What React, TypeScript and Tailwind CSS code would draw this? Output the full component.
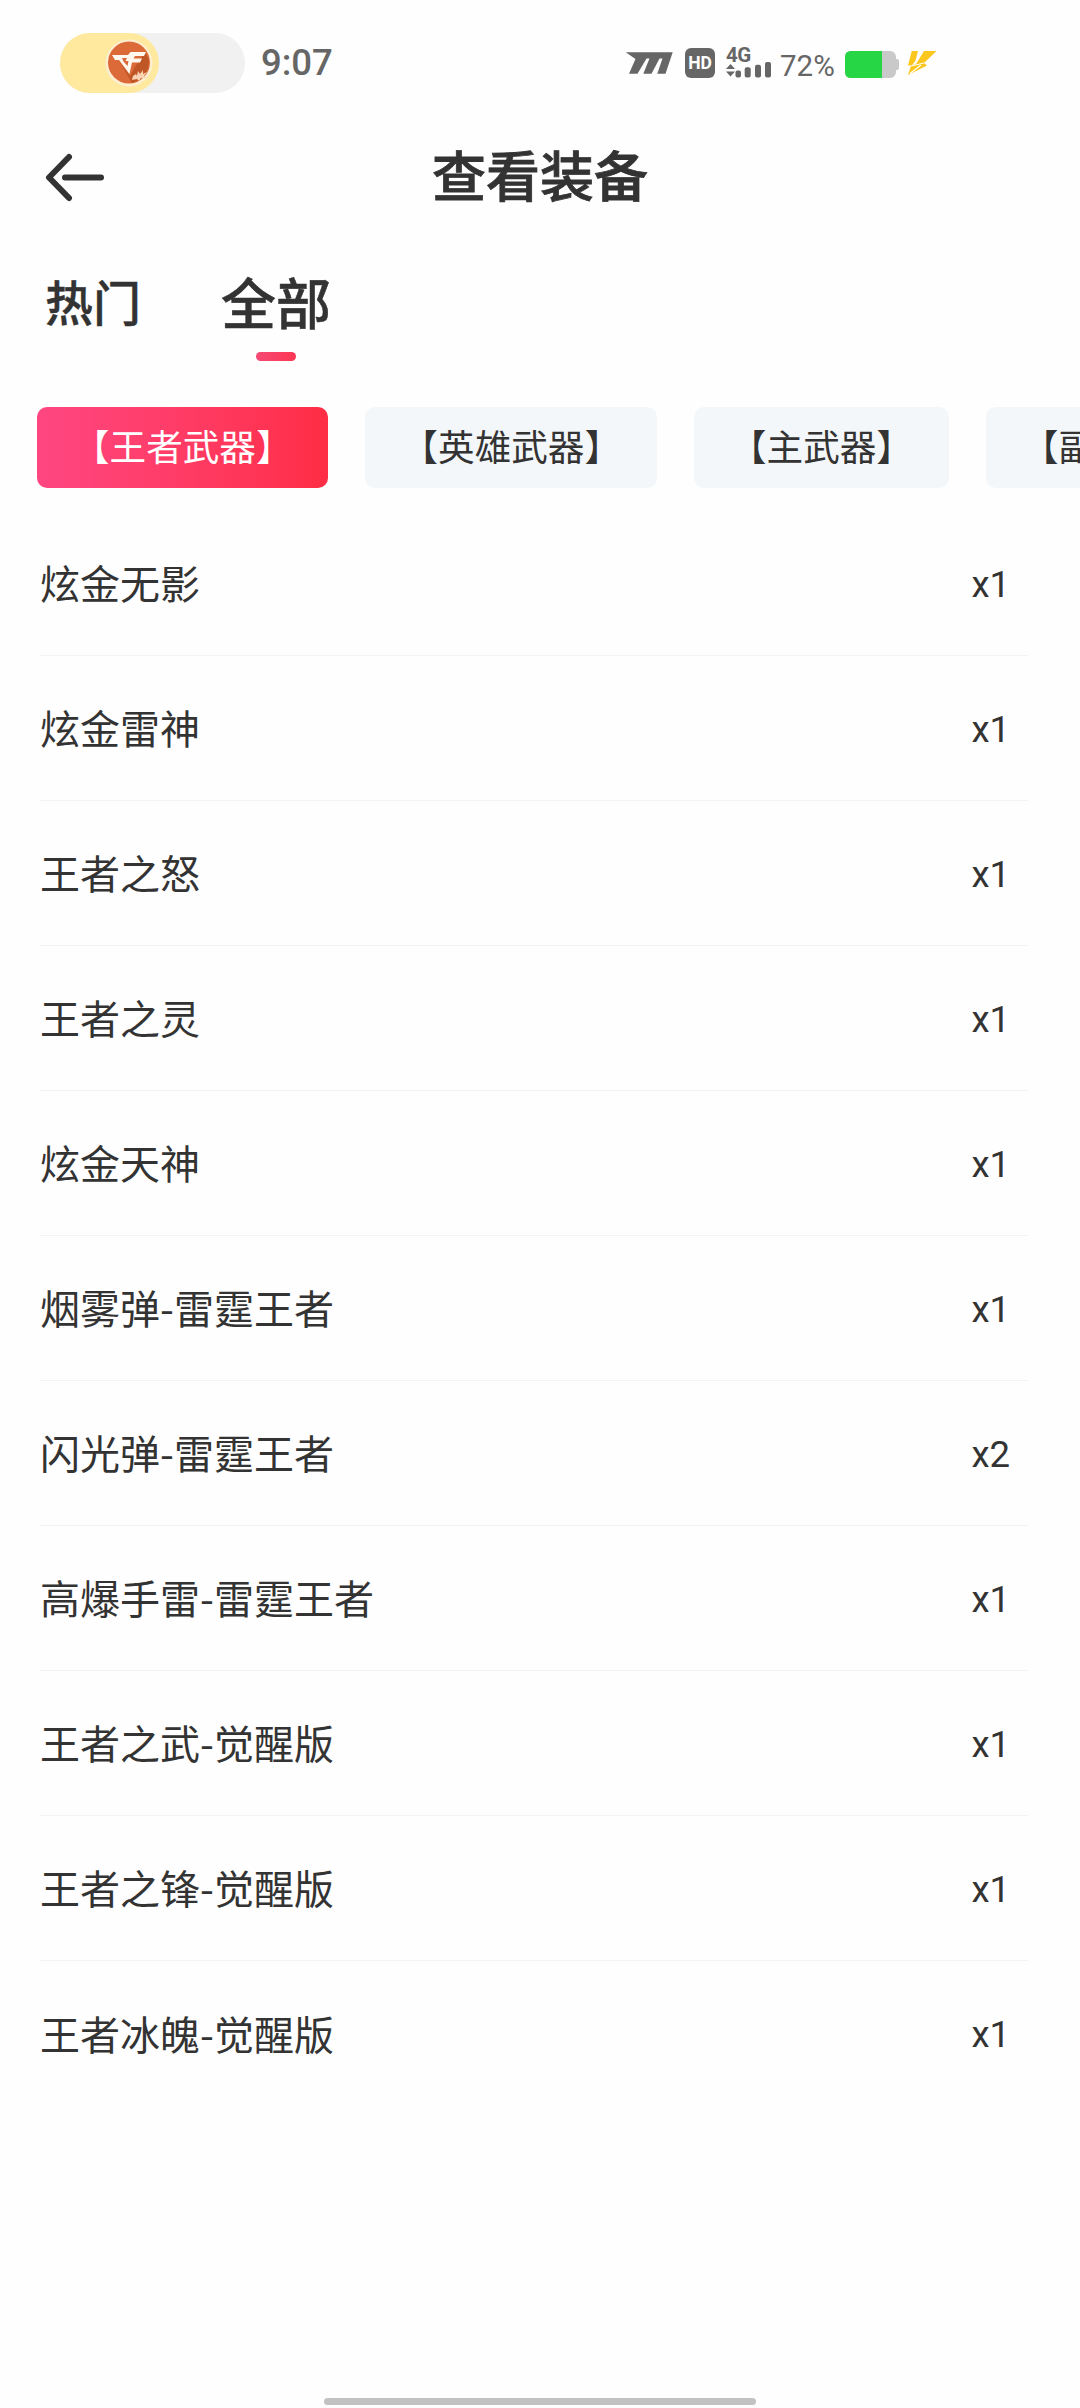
import React from "react";

const items: [string, number][] = [
  ["炫金无影", 1],
  ["炫金雷神", 1],
  ["王者之怒", 1],
  ["王者之灵", 1],
  ["炫金天神", 1],
  ["烟雾弹-雷霆王者", 1],
  ["闪光弹-雷霆王者", 2],
  ["高爆手雷-雷霆王者", 1],
  ["王者之武-觉醒版", 1],
  ["王者之锋-觉醒版", 1],
  ["王者冰魄-觉醒版", 1],
];

const categories = ["【王者武器】", "【英雄武器】", "【主武器】", "【副武器】"];

function GameLogo() {
  return (
    <svg className="block h-[50px] w-[50px] shrink-0" viewBox="0 0 50 50">
      <circle cx="25" cy="25" r="23.5" fill="#fdeed0" />
      <circle cx="25" cy="24.5" r="21" fill="#dc6a38" />
      <path d="M15 23 L26 38 L31 29 L41 14 L45 22 L44 31 L36 42 L28 45 Z" fill="#bf5626" />
      <path
        d="M8 17 H24 L26.500 14 H42 L40 18 H31 L29.500 20.500 H38 L36 24.500 H28 L25.500 36 L15 22 H11 Z M18 20 L19.500 23.500 L23.500 28 L24.500 23 H21.500 L23 20 Z"
        fill="#fff8ee"
        fillRule="evenodd"
      />
      <path d="M29 38 L32 36 L33 38 L34 33 L36 36 L39 32 L39 36 L43 34 L40 38 L43 40 L37 40 L35 43 L33 41 L28 42 Z" fill="#f9d3b4" />
    </svg>
  );
}

function StatusBar() {
  return (
    <div className="flex h-[124px] items-start pt-[33px] pl-[60px]">
      <div className="flex h-[60px] w-[185px] rounded-full bg-[#f1f1f1]">
        <div className="flex h-[60px] w-[99px] items-center rounded-full bg-[#ffe99f] pl-[44px]">
          <GameLogo />
        </div>
      </div>
      <span className="mt-[10px] ml-[16px] w-[74px] font-['Roboto'] text-[36.500px] leading-[40px] font-medium whitespace-nowrap text-[#666]">9:07</span>
      <div className="ml-[290px] flex items-start">
        <svg className="mt-[18px] block h-[24px] w-[48px]" viewBox="0 0 48 24" fill="#666">
          <path d="M0.700 1.300 H47.700 L40.500 22.700 H32.300 L37.500 7.500 H34.500 L26.500 22.700 H18.300 L24.500 7.500 H21.500 L12.500 22.700 H4 L10.500 8 Z" />
        </svg>
        <div className="mt-[15px] ml-[12px] flex h-[30px] w-[30px] items-center justify-center rounded-[6px] bg-[#666]">
          <span className="font-['Roboto'] text-[17.500px] leading-[20px] font-bold text-white">HD</span>
        </div>
        <div className="ml-[11px] flex h-[46px] w-[54px] flex-col pt-[12px]">
          <span className="h-[17px] font-['Roboto'] text-[20.500px] leading-[20px] font-bold tracking-[-0.500px] text-[#666]">4G</span>
          <svg className="block h-[16px] w-[46px] shrink-0" viewBox="0 0 46 16" fill="#666">
            <path d="M4.500 2 L9 7 H0 Z M0 9.500 H9 L4.500 14.500 Z" />
            <rect x="9.500" y="8.500" width="5.500" height="7" rx="2" />
            <rect x="18.700" y="5.300" width="6" height="10.200" rx="2" />
            <rect x="29" y="2.700" width="6" height="12.800" rx="2" />
            <rect x="39" y="0" width="6" height="15.500" rx="2" />
          </svg>
        </div>
        <span className="mt-[15px] w-[60px] font-['Roboto'] text-[29.500px] leading-[36px] whitespace-nowrap text-[#666]">72%</span>
        <svg className="mt-[17px] ml-[4px] block h-[30px] w-[56px]" viewBox="0 0 56 30">
          <rect x="1" y="1" width="51" height="27" rx="6" fill="#c9c9c9" />
          <rect x="50" y="9" width="5" height="11" rx="2" fill="#c9c9c9" />
          <path d="M7 1 H38 V28 H7 Q1 28 1 22 V7 Q1 1 7 1 Z" fill="#27d645" />
        </svg>
        <svg className="mt-[18px] ml-[7px] block h-[28px] w-[32px]" viewBox="0 0 32 28">
          <path d="M4.700 0 H11 L8.500 9.500 L5 14.500 H1 Z" fill="#fbc71f" />
          <path d="M17 0 H29.500 L17 12 L20 14.500 L1 24 L4 14.700 L9 13 Z" fill="#fbc71f" />
          <path d="M14 14 L3 22.500" stroke="#fff" strokeWidth="1.200" />
          <path d="M4 15 L17 12" stroke="#fff" strokeWidth="1" />
        </svg>
      </div>
    </div>
  );
}

export default function App() {
  return (
    <div className="flex h-[2408px] w-[1080px] flex-col overflow-hidden bg-[#fefefe] font-['Noto_Sans_CJK_SC',sans-serif] text-[#333]">
      <StatusBar />
      <header className="flex h-[106px] items-center">
        <svg className="ml-[44px] block h-[50px] w-[64px]" viewBox="0 0 64 50" fill="none" stroke="#333" strokeWidth="6" strokeLinecap="round" strokeLinejoin="round">
          <path d="M25 5 L5 25.500 L25 46 M21 25.500 H57" />
        </svg>
        <h1 className="flex-1 pr-[108px] pb-[7px] text-center text-[54px] leading-[80px] font-medium [-webkit-text-stroke:0.8px_#333]">查看装备</h1>
      </header>
      <nav className="flex h-[177px] items-start gap-[80px] pl-[45px]">
        <span className="mt-[34px] text-[48px] leading-[72px] font-medium [-webkit-text-stroke:0.4px_#333]">热门</span>
        <div className="flex flex-col items-center">
          <span className="mt-[30px] text-[55px] leading-[80px] font-medium [-webkit-text-stroke:0.5px_#333]">全部</span>
          <span className="mt-[12px] h-[9px] w-[40px] rounded-full bg-linear-to-r from-[#f64a75] to-[#fd3552]" />
        </div>
      </nav>
      <div className="flex h-[81px] shrink-0 gap-[37px] pl-[37px]">
        {categories.map((c, i) => (
          <button
            key={c}
            className={
              i === 0
                ? "flex shrink-0 items-center rounded-[10px] bg-linear-to-r from-[#ff4681] to-[#ff2d45] px-[36px] pb-[3px] text-[36.600px] whitespace-nowrap text-white"
                : "flex shrink-0 items-center rounded-[10px] bg-[#f3f7f9] px-[36px] pb-[3px] text-[36.600px] whitespace-nowrap"
            }
          >
            {c}
          </button>
        ))}
      </div>
      <ul className="mt-[23px] mr-[52px] ml-[40px]">
        {items.map(([name, n], i) => (
          <li
            key={name}
            className={
              i < items.length - 1
                ? "flex h-[145px] items-center justify-between border-b border-[#f3f3f3] pr-[18px]"
                : "flex h-[145px] items-center justify-between pr-[18px]"
            }
          >
            <span className="pb-[2px] text-[40px] leading-[60px]">{name}</span>
            <span className="pt-[3px] font-['Roboto'] text-[36.500px] leading-[60px]">x{n}</span>
          </li>
        ))}
      </ul>
      <div className="mx-auto mt-auto mb-[3px] h-[7px] w-[432px] rounded-full bg-[#c2c2c2]" />
    </div>
  );
}
